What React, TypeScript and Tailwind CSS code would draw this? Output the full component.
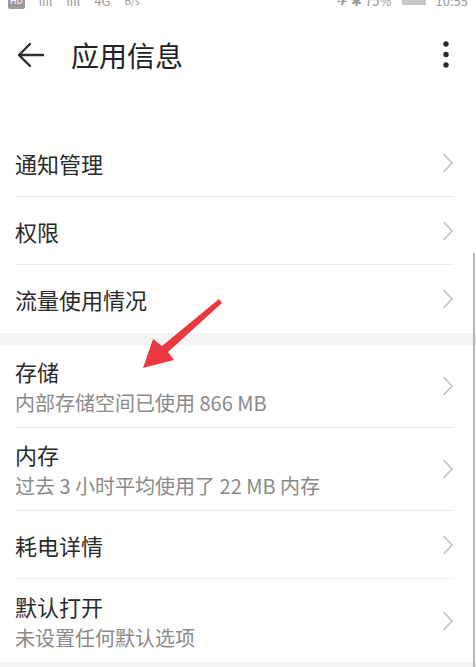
import React from "react";

const Chevron = () => (
  <svg width="12" height="20" viewBox="0 0 12 20" className="shrink-0">
    <path d="M2 1.5 L10 10 L2 18.5" fill="none" stroke="#c2c2c2" strokeWidth="1.6" strokeLinecap="round" strokeLinejoin="round" />
  </svg>
);

type Item = { title: string; sub?: string; last?: boolean };

const Row = ({ title, sub, last }: Item) => (
  <div className="pl-[15px] pr-[22px]">
    <div
      className={`flex items-center justify-between ${sub ? "h-[83px]" : "h-[68px]"} ${last ? "" : "border-b border-[#ebebeb]"}`}
    >
      <div className="flex flex-col">
        <span className="text-[22px] leading-[30px] text-[#2a2a2a]">{title}</span>
        {sub && <span className="text-[20px] leading-[27px] text-[#8a8a8a] mt-[3px]">{sub}</span>}
      </div>
      <Chevron />
    </div>
  </div>
);

export default function App() {
  return (
    <div
      className="relative w-[476px] h-[667px] overflow-hidden bg-white"
      style={{ fontFamily: '"Noto Sans CJK SC", "Noto Sans", sans-serif' }}
    >
      {/* status bar (cropped at the top edge) */}
      <div className="h-[10px] overflow-hidden">
        <div className="flex justify-between px-[8px] -mt-[7px] text-[13px] leading-[16px] text-[#9a9a9a]">
          <div className="flex items-center gap-[14px]">
            <span className="bg-[#9a9a9a] text-white text-[9px] px-[2px] rounded-[2px]">HD</span>
            <span>ıııl</span>
            <span>ıııl</span>
            <span>4G</span>
            <span className="text-[10px]">B/s</span>
          </div>
          <div className="flex items-center gap-[10px]">
            <span>✈ ✱ 75%</span>
            <span className="inline-block w-[24px] h-[8px] bg-[#c8c8c8]" />
            <span>10:55</span>
          </div>
        </div>
      </div>

      {/* header */}
      <div className="mt-[17px] h-[56px] flex items-center pl-[17px] pr-[26px]">
        <svg width="28" height="28" viewBox="0 0 28 28">
          <path d="M26 14 H3 M13 3 L2 14 L13 25" fill="none" stroke="#2f2f2f" strokeWidth="2.4" strokeLinecap="round" strokeLinejoin="round" />
        </svg>
        <span className="ml-[26px] text-[28px] leading-[36px] text-[#222] flex-1">应用信息</span>
        <svg width="8" height="28" viewBox="0 0 8 28">
          <circle cx="4" cy="3" r="2.7" fill="#2a2a2a" />
          <circle cx="4" cy="13.5" r="2.7" fill="#2a2a2a" />
          <circle cx="4" cy="24" r="2.7" fill="#2a2a2a" />
        </svg>
      </div>

      <div className="h-[46px]" />

      <Row title="通知管理" />
      <Row title="权限" />
      <Row title="流量使用情况" last />

      <div className="h-[12px] bg-[#f4f4f4]" />

      <Row title="存储" sub="内部存储空间已使用 866 MB" />
      <Row title="内存" sub="过去 3 小时平均使用了 22 MB 内存" />
      <Row title="耗电详情" />
      <Row title="默认打开" sub="未设置任何默认选项" last />

      <div className="h-[20px] bg-[#f4f4f4]" />

      {/* scroll indicator */}
      <div className="absolute right-[1px] top-[253px] w-[2px] h-[414px] bg-[#b5b5b5]" />

      {/* red annotation arrow */}
      <svg className="absolute left-0 top-0 pointer-events-none" width="476" height="667" viewBox="0 0 476 667">
        <polygon
          points="219,299 222,303 168,352 174,360 143,368 153,339 162,346"
          fill="#ec3940"
          strokeLinejoin="round"
        />
      </svg>
    </div>
  );
}
